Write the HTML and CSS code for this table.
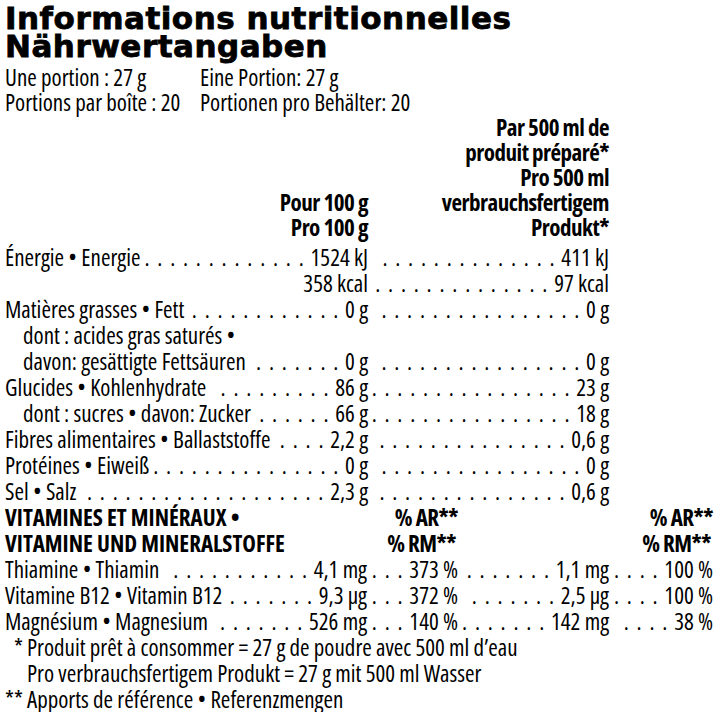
FILE: index.html
```html
<!DOCTYPE html>
<html lang="fr"><head><meta charset="utf-8"><title>Informations nutritionnelles</title><link rel="stylesheet" href="styles.css"></head>
<body>
<div class="page">
  <h1 class="title">Informations nutritionnelles<br>Nährwertangaben</h1>

  <div class="info">
    <div>Une portion : 27 g</div><div>Eine Portion: 27 g</div>
    <div>Portions par boîte : 20</div><div>Portionen pro Behälter: 20</div>
  </div>

  <div class="head">
    <div class="h1col">Pour 100 g<br>Pro 100 g</div>
    <div class="h2col">Par 500 ml de<br>produit préparé*<br>Pro 500 ml<br>verbrauchsfertigem<br>Produkt*</div>
  </div>

  <div class="table">
    <div class="row">
      <div class="cell"><span class="lbl">Énergie • Energie</span><span class="ldr"></span><span class="val">1524 kJ</span></div>
      <div class="cell"><span class="ldr"></span><span class="val">411 kJ</span></div>
    </div>
    <div class="row">
      <div class="cell"><span class="gap"></span><span class="val">358 kcal</span></div>
      <div class="cell"><span class="ldr"></span><span class="val">97 kcal</span></div>
    </div>
    <div class="row">
      <div class="cell"><span class="lbl">Matières grasses • Fett</span><span class="ldr"></span><span class="val">0 g</span></div>
      <div class="cell"><span class="ldr"></span><span class="val">0 g</span></div>
    </div>
    <div class="row">
      <div class="cell"><span class="lbl sub">dont : acides gras saturés •</span></div>
      <div class="cell"></div>
    </div>
    <div class="row">
      <div class="cell"><span class="lbl sub">davon: gesättigte Fettsäuren</span><span class="ldr"></span><span class="val">0 g</span></div>
      <div class="cell"><span class="ldr"></span><span class="val">0 g</span></div>
    </div>
    <div class="row">
      <div class="cell"><span class="lbl">Glucides • Kohlenhydrate</span><span class="ldr"></span><span class="val">86 g</span></div>
      <div class="cell"><span class="ldr"></span><span class="val">23 g</span></div>
    </div>
    <div class="row">
      <div class="cell"><span class="lbl sub">dont : sucres • davon: Zucker</span><span class="ldr"></span><span class="val">66 g</span></div>
      <div class="cell"><span class="ldr"></span><span class="val">18 g</span></div>
    </div>
    <div class="row">
      <div class="cell"><span class="lbl">Fibres alimentaires • Ballaststoffe</span><span class="ldr"></span><span class="val">2,2 g</span></div>
      <div class="cell"><span class="ldr"></span><span class="val">0,6 g</span></div>
    </div>
    <div class="row">
      <div class="cell"><span class="lbl">Protéines • Eiweiß</span><span class="ldr"></span><span class="val">0 g</span></div>
      <div class="cell"><span class="ldr"></span><span class="val">0 g</span></div>
    </div>
    <div class="row">
      <div class="cell"><span class="lbl">Sel • Salz</span><span class="ldr"></span><span class="val">2,3 g</span></div>
      <div class="cell"><span class="ldr"></span><span class="val">0,6 g</span></div>
    </div>

    <div class="vrow bold">
      <div class="cell">VITAMINES ET MINÉRAUX •</div>
      <div class="cell right pct">% AR**</div>
      <div class="cell"></div>
      <div class="cell right pct">% AR**</div>
    </div>
    <div class="vrow bold">
      <div class="cell">VITAMINE UND MINERALSTOFFE</div>
      <div class="cell right pct rm">% RM**</div>
      <div class="cell"></div>
      <div class="cell right pct rm">% RM**</div>
    </div>
    <div class="vrow">
      <div class="cell"><span class="lbl">Thiamine • Thiamin</span><span class="ldr"></span><span class="val">4,1 mg</span></div>
      <div class="cell"><span class="ldr"></span><span class="val">373 %</span></div>
      <div class="cell"><span class="ldr"></span><span class="val">1,1 mg</span></div>
      <div class="cell"><span class="ldr"></span><span class="val">100 %</span></div>
    </div>
    <div class="vrow">
      <div class="cell"><span class="lbl">Vitamine B12 • Vitamin B12</span><span class="ldr"></span><span class="val">9,3 µg</span></div>
      <div class="cell"><span class="ldr"></span><span class="val">372 %</span></div>
      <div class="cell"><span class="ldr"></span><span class="val">2,5 µg</span></div>
      <div class="cell"><span class="ldr"></span><span class="val">100 %</span></div>
    </div>
    <div class="vrow">
      <div class="cell"><span class="lbl">Magnésium • Magnesium</span><span class="ldr"></span><span class="val">526 mg</span></div>
      <div class="cell"><span class="ldr"></span><span class="val">140 %</span></div>
      <div class="cell"><span class="ldr"></span><span class="val">142 mg</span></div>
      <div class="cell"><span class="ldr"></span><span class="val">38 %</span></div>
    </div>

    <div class="note"><span class="mark">*</span><span>Produit prêt à consommer = 27 g de poudre avec 500 ml d’eau</span></div>
    <div class="note"><span class="mark"></span><span>Pro verbrauchsfertigem Produkt = 27 g mit 500 ml Wasser</span></div>
    <div class="note"><span class="mark mark2">**</span><span>Apports de référence • Referenzmengen</span></div>
  </div>
</div>
</body></html>
```
FILE: styles.css
```css
html, body {
  margin: 0;
  padding: 0;
  background: #ffffff;
  color: #000000;
}

.page {
  padding: 4px 5px 0 5px;
  font-family: "Open Sans", "Liberation Sans", sans-serif;
  font-stretch: 80%;
  font-size: 23px;
  line-height: 25px;
}

.title {
  margin: 0;
  font-family: "DejaVu Sans", sans-serif;
  font-stretch: normal;
  font-weight: bold;
  font-size: 31px;
  letter-spacing: 0.5px;
  line-height: 28px;
  -webkit-text-stroke: 0.8px #000;
}

.info {
  margin-top: 5px;
  display: grid;
  grid-template-columns: 195px auto;
}

.head {
  display: grid;
  grid-template-columns: 363px 241px;
  font-weight: bold;
  letter-spacing: -0.5px;
  text-align: right;
}

.h1col {
  align-self: end;
}

.table {
  margin-top: 4px;
  line-height: 26px;
}

.row {
  display: grid;
  grid-template-columns: 363px 241px;
}

.vrow {
  display: grid;
  grid-template-columns: 362px 91px 151px 104px;
}

.bold {
  font-weight: bold;
}

.cell {
  display: flex;
  white-space: nowrap;
  min-width: 0;
}

.right {
  justify-content: flex-end;
}

.pct {
  letter-spacing: -0.5px;
}

.rm {
  padding-right: 2px;
}

.lbl {
  flex: none;
}

.sub {
  padding-left: 18px;
}

.gap {
  flex: 1;
}

.ldr {
  flex: 1;
  min-width: 0;
  height: 26px;
  overflow: hidden;
  white-space: normal;
  direction: rtl;
  letter-spacing: 1.75px;
  padding-right: 5px;
  padding-left: 2px;
}

.ldr::before {
  content: ". . . . . . . . . . . . . . . . . . . . . . . . . . . . . . . . . . . . . . . . . . . . . . . .";
}

.val {
  flex: none;
}

.note {
  display: flex;
  white-space: nowrap;
}

.mark {
  width: 22px;
  flex: none;
  text-align: right;
  padding-right: 4px;
  box-sizing: border-box;
}

.mark2 {
  text-align: left;
}
```
